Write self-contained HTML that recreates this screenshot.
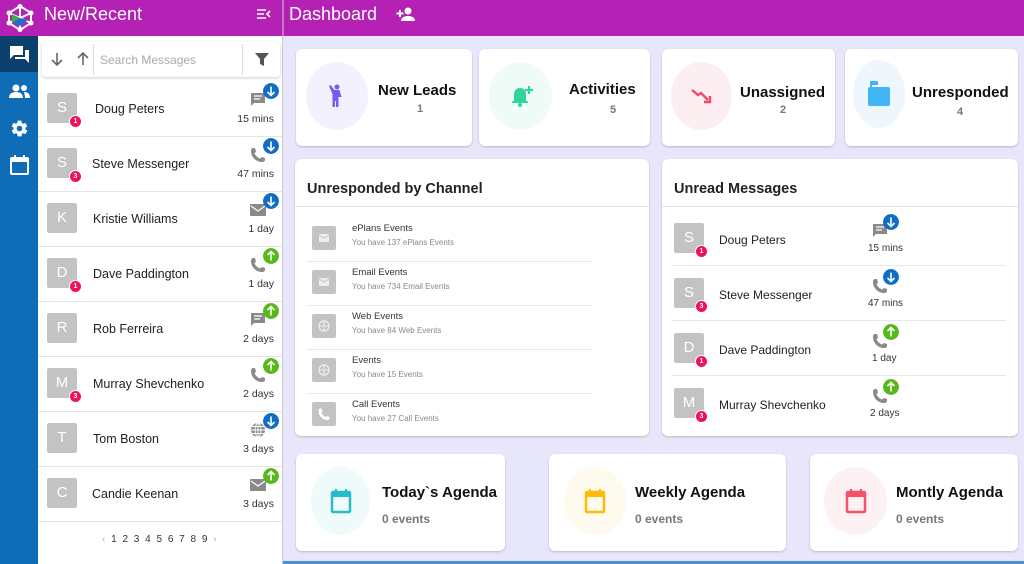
<!DOCTYPE html>
<html><head><meta charset="utf-8"><style>
*{box-sizing:border-box;margin:0;padding:0}
body{width:1024px;height:564px;overflow:hidden;background:#e7e6fb;font-family:"Liberation Sans",sans-serif;position:relative}
.abs{position:absolute}
.top{left:0;top:0;width:1024px;height:36px;background:#b520b5}
.nav{left:0;top:36px;width:38px;height:528px;background:#0f6db8}
.list{left:38px;top:36px;width:245px;height:528px;background:#fff;border-right:1px solid #ccc}
.row{position:absolute;left:38px;width:244px;height:55px;border-bottom:1px solid #e4e4e4}
.av{position:absolute;left:9px;top:11px;width:30px;height:30px;background:#c3c3c3;border-radius:2px;color:#fff;font-size:15px;text-align:center;line-height:30px}
.bd{position:absolute;left:31px;top:33px;width:13px;height:13px;border-radius:50%;background:#f0105a;color:#fff;font-size:7px;font-weight:bold;text-align:center;line-height:12px;border:1px solid #fff}
.nm{position:absolute;left:54px;top:20px;font-size:12.5px;color:#222}
.tm{position:absolute;right:8px;top:31px;font-size:10.5px;color:#333}
.ic{position:absolute;right:16px;top:10px;width:16px;height:16px}
.dot{position:absolute;right:3px;top:1px;width:16px;height:16px;border-radius:50%}
.card{position:absolute;background:#fff;border-radius:6px;box-shadow:0 1px 2px rgba(0,0,0,.2)}
.circ{position:absolute;border-radius:50%}
.st{position:absolute;font-size:15px;font-weight:bold;color:#111;white-space:nowrap}
.sn{position:absolute;font-size:11px;font-weight:bold;color:#777}
.ch{position:absolute;left:12px;width:285px;height:44px;border-bottom:1px solid #e8e8e8}
.chi{position:absolute;left:5px;top:8px;width:24px;height:24px;background:#c3c3c3;border-radius:2px}
.cht{position:absolute;left:45px;top:5px;font-size:9.5px;color:#333}
.chs{position:absolute;left:45px;top:20px;font-size:8px;color:#888}
.ur{position:absolute;left:10px;width:334px;height:55px;border-bottom:1px solid #e8e8e8}
.ur .av{left:2px;top:12px}
.ur .bd{left:23px;top:34px}
.ur .nm{left:47px;top:22px;font-size:12px}
.ur .ic{left:200px;top:12px}
.ur .dot{left:211px;top:3px}
.ur .tm{left:196px;right:auto;top:32px;font-size:10px}
</style></head><body>
<div class="abs top"></div>
<svg class="abs" style="left:6px;top:4px" width="28" height="28" viewBox="0 0 28 28"><g stroke="#fff" stroke-width="2" fill="none"><path d="M14 2L25 9 25 19 14 26 3 19 3 9Z"/><path d="M3 9L25 19M25 9L3 19M14 2V26"/></g><path d="M14 14L6 10 6 18Z" fill="#3cb043"/><path d="M14 14L22 16 14 22 6 18Z" fill="#1a73c9"/><circle cx="14" cy="2.5" r="2.5" fill="#fff"/><circle cx="25" cy="9" r="2.5" fill="#fff"/><circle cx="25" cy="19" r="2.5" fill="#fff"/><circle cx="14" cy="25.5" r="2.5" fill="#fff"/><circle cx="3" cy="19" r="2.5" fill="#fff"/><circle cx="3" cy="9" r="2.5" fill="#fff"/></svg>
<div class="abs" style="left:44px;top:4px;color:#fff;font-size:18px">New/Recent</div>
<svg class="abs" style="left:256px;top:7px" width="15" height="14" viewBox="0 0 15 14"><g stroke="#fff" stroke-width="1.6" fill="none"><path d="M1 3H10M1 7H8M1 11H10M14 4L11 7 14 10"/></g></svg>
<div class="abs" style="left:282px;top:0;width:2px;height:36px;background:#c973c9"></div>
<div class="abs" style="left:289px;top:4px;color:#fff;font-size:18px">Dashboard</div>
<svg class="abs" style="left:396px;top:6px" width="20" height="16" viewBox="0 0 20 16"><circle cx="12" cy="5" r="3.5" fill="#fff"/><path d="M5 15c0-4 4-5 7-5s7 1 7 5z" fill="#fff"/><path d="M4 4v7M0.5 7.5h7" stroke="#fff" stroke-width="2"/></svg>

<div class="abs nav"></div>
<div class="abs" style="left:0;top:36px;width:38px;height:36px;background:#0b3f6e"></div>
<svg class="abs" style="left:9px;top:45px" width="21" height="19" viewBox="0 0 21 19"><path d="M1 1h13v9H5l-4 4z" fill="#fff"/><path d="M16 5h4v13l-4-4H6v-2h10z" fill="#fff"/></svg>
<svg class="abs" style="left:9px;top:84px" width="21" height="14" viewBox="0 0 21 14"><circle cx="7" cy="4" r="3.5" fill="#fff"/><circle cx="15" cy="4" r="3" fill="#fff"/><path d="M0 14c0-5 4-6 7-6s7 1 7 6z M15 8c3 0 6 1 6 6h-5c0-3-1-5-1-6z" fill="#fff"/></svg>
<svg class="abs" style="left:10px;top:119px" width="19" height="19" viewBox="0 0 24 24"><path fill="#fff" d="M19.4 13c.04-.3.06-.6.06-1s-.02-.7-.06-1l2.1-1.6c.2-.15.24-.4.12-.6l-2-3.5c-.12-.2-.38-.3-.6-.2l-2.5 1c-.5-.4-1.1-.7-1.700-1l-.4-2.6C14.4 2.2 14.2 2 14 2h-4c-.25 0-.45.2-.5.4l-.4 2.6c-.6.3-1.2.6-1.7 1l-2.5-1c-.2-.1-.5 0-.6.2l-2 3.5c-.1.2-.06.45.12.6L4.6 11c-.04.3-.06.6-.06 1s.02.7.06 1l-2.1 1.6c-.2.15-.24.4-.12.6l2 3.5c.12.2.38.3.6.2l2.5-1c.5.4 1.1.7 1.7 1l.4 2.6c.05.2.25.4.5.4h4c.25 0 .45-.2.5-.4l.4-2.6c.6-.3 1.2-.6 1.7-1l2.5 1c.2.1.5 0 .6-.2l2-3.5c.12-.2.07-.45-.12-.6zM12 15.5A3.5 3.5 0 1 1 12 8.5a3.5 3.5 0 0 1 0 7z"/></svg>
<svg class="abs" style="left:10px;top:155px" width="19" height="20" viewBox="0 0 19 20"><rect x="1" y="3" width="17" height="16" rx="1" fill="none" stroke="#fff" stroke-width="2"/><rect x="1" y="3" width="17" height="4" fill="#fff"/><path d="M5 0v4M14 0v4" stroke="#fff" stroke-width="2"/></svg>

<div class="abs list"></div>
<div class="abs" style="left:42px;top:42px;width:238px;height:35px;border-radius:4px;box-shadow:0 1px 3px rgba(0,0,0,.2);background:#fff"></div>
<svg class="abs" style="left:50px;top:52px" width="40" height="14" viewBox="0 0 40 14"><g stroke="#666" stroke-width="1.6" fill="none"><path d="M7 1v12M2 8l5 5 5-5M33 13V1M28 6l5-5 5 5"/></g></svg>
<div class="abs" style="left:93px;top:44px;width:1px;height:31px;background:#ddd"></div>
<div class="abs" style="left:100px;top:53px;font-size:12px;color:#aaa">Search Messages</div>
<div class="abs" style="left:242px;top:44px;width:1px;height:31px;background:#ddd"></div>
<svg class="abs" style="left:255px;top:53px" width="14" height="13" viewBox="0 0 14 13"><path d="M0 0h14L9 6v7L5 11V6z" fill="#555"/></svg>

<svg width="0" height="0" style="position:absolute"><defs>
<g id="chat"><path d="M1 1h14v10H4l-3 3z" fill="#8a8a8a"/><path d="M4 4h8M4 7h6" stroke="#fff" stroke-width="1.2"/></g>
<g id="phone"><path d="M3 1c-1 0-2 1-2 3 0 6 5 11 11 11 2 0 3-1 3-2v-2l-3-1-2 1.5C7.5 10.5 5.5 8.5 4.5 6.5L6 4.5 5 1z" fill="#8a8a8a"/></g>
<g id="mail"><rect x="0" y="2" width="16" height="12" rx="1" fill="#8a8a8a"/><path d="M1 4l7 5 7-5" stroke="#fff" stroke-width="1.2" fill="none"/></g>
<g id="globe"><circle cx="8" cy="8" r="7" fill="#8a8a8a"/><g stroke="#fff" stroke-width=".9" fill="none"><ellipse cx="8" cy="8" rx="3" ry="7"/><path d="M1 8h14M2 4.5h12M2 11.5h12M8 1v14"/></g></g>
<g id="dn"><circle cx="8" cy="8" r="8" fill="#0f6dc3"/><path d="M8 3.5v9M4.5 9l3.5 3.5L11.5 9" stroke="#fff" stroke-width="1.6" fill="none"/></g>
<g id="up"><circle cx="8" cy="8" r="8" fill="#56b81a"/><path d="M8 12.5v-9M4.5 7l3.5-3.5L11.5 7" stroke="#fff" stroke-width="1.6" fill="none"/></g>
</defs></svg>

<div class="row" style="top:82px"><div class="av">S</div><div class="bd">1</div><div class="nm" style="left:57px">Doug Peters</div><svg class="ic" viewBox="0 0 16 16"><use href="#chat"/></svg><svg class="dot" viewBox="0 0 16 16"><use href="#dn"/></svg><div class="tm">15 mins</div></div>
<div class="row" style="top:137px"><div class="av">S</div><div class="bd">3</div><div class="nm">Steve Messenger</div><svg class="ic" viewBox="0 0 16 16"><use href="#phone"/></svg><svg class="dot" viewBox="0 0 16 16"><use href="#dn"/></svg><div class="tm">47 mins</div></div>
<div class="row" style="top:192px"><div class="av">K</div><div class="nm" style="left:55px">Kristie Williams</div><svg class="ic" viewBox="0 0 16 16"><use href="#mail"/></svg><svg class="dot" viewBox="0 0 16 16"><use href="#dn"/></svg><div class="tm">1 day</div></div>
<div class="row" style="top:247px"><div class="av">D</div><div class="bd">1</div><div class="nm" style="left:55px">Dave Paddington</div><svg class="ic" viewBox="0 0 16 16"><use href="#phone"/></svg><svg class="dot" viewBox="0 0 16 16"><use href="#up"/></svg><div class="tm">1 day</div></div>
<div class="row" style="top:302px"><div class="av">R</div><div class="nm" style="left:55px">Rob Ferreira</div><svg class="ic" viewBox="0 0 16 16"><use href="#chat"/></svg><svg class="dot" viewBox="0 0 16 16"><use href="#up"/></svg><div class="tm">2 days</div></div>
<div class="row" style="top:357px"><div class="av">M</div><div class="bd">3</div><div class="nm" style="left:55px">Murray Shevchenko</div><svg class="ic" viewBox="0 0 16 16"><use href="#phone"/></svg><svg class="dot" viewBox="0 0 16 16"><use href="#up"/></svg><div class="tm">2 days</div></div>
<div class="row" style="top:412px"><div class="av">T</div><div class="nm" style="left:55px">Tom Boston</div><svg class="ic" viewBox="0 0 16 16"><use href="#globe"/></svg><svg class="dot" viewBox="0 0 16 16"><use href="#dn"/></svg><div class="tm">3 days</div></div>
<div class="row" style="top:467px"><div class="av">C</div><div class="nm">Candie Keenan</div><svg class="ic" viewBox="0 0 16 16"><use href="#mail"/></svg><svg class="dot" viewBox="0 0 16 16"><use href="#up"/></svg><div class="tm">3 days</div></div>
<div class="abs" style="left:102px;top:534px;font-size:10px;color:#333;letter-spacing:1.5px"><span style="color:#aaa">‹</span> 1 2 3 4 5 6 7 8 9 <span style="color:#aaa">›</span></div>

<!-- stat cards -->
<div class="card" style="left:296px;top:49px;width:176px;height:97px"><div class="circ" style="left:10px;top:13px;width:62px;height:68px;background:#f3f1fd"></div>
<svg class="abs" style="left:32px;top:35px" width="18" height="24" viewBox="0 0 18 24"><circle cx="9" cy="3" r="2.5" fill="#7a5af5"/><path d="M1 2l1.5-1 4 5h5l2 7h-3v10H8v-6H7v6H4.5V10z" fill="#7a5af5"/></svg>
<div class="st" style="left:82px;top:33px">New Leads</div><div class="sn" style="left:121px;top:54px">1</div></div>
<div class="card" style="left:479px;top:49px;width:171px;height:97px"><div class="circ" style="left:10px;top:13px;width:63px;height:68px;background:#effbf6"></div>
<svg class="abs" style="left:31px;top:36px" width="24" height="22" viewBox="0 0 24 22"><path d="M10 3c-4 0-6 3-6 7v5l-2 2v1h16v-1l-2-2v-5c0-4-2-7-6-7z" fill="#2fd49a"/><circle cx="10" cy="20" r="2" fill="#2fd49a"/><path d="M19 1v8M15 5h8" stroke="#2fd49a" stroke-width="2.2"/></svg>
<div class="st" style="left:90px;top:32px">Activities</div><div class="sn" style="left:131px;top:55px">5</div></div>
<div class="card" style="left:662px;top:49px;width:173px;height:97px"><div class="circ" style="left:9px;top:13px;width:61px;height:68px;background:#fdeff1"></div>
<svg class="abs" style="left:29px;top:39px" width="24" height="16" viewBox="0 0 24 16"><path d="M1 2l6 5 3-2 7 7" stroke="#f2476a" stroke-width="2.4" fill="none"/><path d="M19 8v6h-6" stroke="#f2476a" stroke-width="2.4" fill="none"/></svg>
<div class="st" style="left:78px;top:35px">Unassigned</div><div class="sn" style="left:118px;top:55px">2</div></div>
<div class="card" style="left:845px;top:49px;width:173px;height:97px"><div class="circ" style="left:8px;top:11px;width:52px;height:68px;background:#eef7fe"></div>
<svg class="abs" style="left:22px;top:30px" width="24" height="28" viewBox="0 0 24 28"><rect x="1" y="8" width="22" height="19" rx="2" fill="#41b5f6"/><path d="M3 2h8v4H5v6H3z" fill="#41b5f6"/><path d="M5 6h8v2H5z" fill="#fff"/></svg>
<div class="st" style="left:67px;top:35px">Unresponded</div><div class="sn" style="left:112px;top:57px">4</div></div>

<!-- channel card -->
<div class="card" style="left:295px;top:159px;width:354px;height:277px">
<div class="abs" style="left:12px;top:22px;font-size:14.5px;font-weight:bold;color:#222">Unresponded by Channel</div>
<div class="abs" style="left:0;top:47px;width:354px;height:1px;background:#e3e3e3"></div>
<div class="ch" style="top:59px"><div class="chi"><svg width="24" height="24" viewBox="-7 -8 24 24"><rect width="10" height="8" fill="#eee"/><path d="M0 1l5 3 5-3" stroke="#c3c3c3" fill="none"/></svg></div><div class="cht">ePlans Events</div><div class="chs">You have 137 ePlans Events</div></div>
<div class="ch" style="top:103px"><div class="chi"><svg width="24" height="24" viewBox="-7 -8 24 24"><rect width="10" height="8" fill="#eee"/><path d="M0 1l5 3 5-3" stroke="#c3c3c3" fill="none"/></svg></div><div class="cht">Email Events</div><div class="chs">You have 734 Email Events</div></div>
<div class="ch" style="top:147px"><div class="chi"><svg width="24" height="24" viewBox="-7 -7 24 24"><circle cx="5" cy="5" r="5" fill="none" stroke="#eee" stroke-width="1.2"/><path d="M0 5h10M5 0v10" stroke="#eee"/></svg></div><div class="cht">Web Events</div><div class="chs">You have 84 Web Events</div></div>
<div class="ch" style="top:191px"><div class="chi"><svg width="24" height="24" viewBox="-7 -7 24 24"><circle cx="5" cy="5" r="5" fill="none" stroke="#eee" stroke-width="1.2"/><path d="M0 5h10M5 0v10" stroke="#eee"/></svg></div><div class="cht">Events</div><div class="chs">You have 15 Events</div></div>
<div class="ch" style="top:235px;border:none"><div class="chi"><svg width="24" height="24" viewBox="-6 -6 24 24"><path d="M2 0.5c-1 0-1.5 1-1.5 2.5 0 5 4 9 9 9 1.5 0 2-1 2-1.5V9l-2.5-1-1.5 1C6 8 4.5 6.5 3.5 5L4.5 3.5 3.700 0.5z" fill="#fff"/></svg></div><div class="cht">Call Events</div><div class="chs">You have 27 Call Events</div></div>
</div>

<!-- unread -->
<div class="card" style="left:662px;top:159px;width:356px;height:277px">
<div class="abs" style="left:12px;top:22px;font-size:14.5px;font-weight:bold;color:#222">Unread Messages</div>
<div class="abs" style="left:0;top:47px;width:356px;height:1px;background:#e3e3e3"></div>
<div class="ur" style="top:52px"><div class="av">S</div><div class="bd">1</div><div class="nm">Doug Peters</div><svg class="ic" viewBox="0 0 16 16"><use href="#chat"/></svg><svg class="dot" viewBox="0 0 16 16"><use href="#dn"/></svg><div class="tm">15 mins</div></div>
<div class="ur" style="top:107px"><div class="av">S</div><div class="bd">3</div><div class="nm">Steve Messenger</div><svg class="ic" viewBox="0 0 16 16"><use href="#phone"/></svg><svg class="dot" viewBox="0 0 16 16"><use href="#dn"/></svg><div class="tm">47 mins</div></div>
<div class="ur" style="top:162px"><div class="av">D</div><div class="bd">1</div><div class="nm">Dave Paddington</div><svg class="ic" viewBox="0 0 16 16"><use href="#phone"/></svg><svg class="dot" viewBox="0 0 16 16"><use href="#up"/></svg><div class="tm" style="left:200px">1 day</div></div>
<div class="ur" style="top:217px;border:none"><div class="av">M</div><div class="bd">3</div><div class="nm">Murray Shevchenko</div><svg class="ic" viewBox="0 0 16 16"><use href="#phone"/></svg><svg class="dot" viewBox="0 0 16 16"><use href="#up"/></svg><div class="tm" style="left:198px">2 days</div></div>
</div>

<!-- agenda -->
<div class="card" style="left:296px;top:454px;width:209px;height:97px"><div class="circ" style="left:15px;top:13px;width:59px;height:68px;background:#effafb"></div>
<svg class="abs" style="left:34px;top:34px" width="22" height="26" viewBox="0 0 22 26"><rect x="2" y="4" width="18" height="20" rx="1" fill="none" stroke="#26bccc" stroke-width="2.5"/><rect x="2" y="4" width="18" height="5" fill="#26bccc"/><path d="M6 1v4M16 1v4" stroke="#26bccc" stroke-width="2"/></svg>
<div class="st" style="left:86px;top:30px">Today`s Agenda</div><div class="sn" style="left:86px;top:58px;font-size:12px">0 events</div></div>
<div class="card" style="left:549px;top:454px;width:237px;height:97px"><div class="circ" style="left:15px;top:13px;width:62px;height:68px;background:#fefaee"></div>
<svg class="abs" style="left:35px;top:34px" width="22" height="26" viewBox="0 0 22 26"><rect x="2" y="4" width="18" height="20" rx="1" fill="none" stroke="#ffbb0a" stroke-width="2.5"/><rect x="2" y="4" width="18" height="5" fill="#ffbb0a"/><path d="M6 1v4M16 1v4" stroke="#ffbb0a" stroke-width="2"/></svg>
<div class="st" style="left:86px;top:30px">Weekly Agenda</div><div class="sn" style="left:86px;top:58px;font-size:12px">0 events</div></div>
<div class="card" style="left:810px;top:454px;width:208px;height:97px"><div class="circ" style="left:14px;top:13px;width:63px;height:68px;background:#fef1f3"></div>
<svg class="abs" style="left:35px;top:34px" width="22" height="26" viewBox="0 0 22 26"><rect x="2" y="4" width="18" height="20" rx="1" fill="none" stroke="#f6516a" stroke-width="2.5"/><rect x="2" y="4" width="18" height="5" fill="#f6516a"/><path d="M6 1v4M16 1v4" stroke="#f6516a" stroke-width="2"/></svg>
<div class="st" style="left:86px;top:30px">Montly Agenda</div><div class="sn" style="left:86px;top:58px;font-size:12px">0 events</div></div>
<div class="abs" style="left:283px;top:561px;width:741px;height:3px;background:#4c8fd6"></div>
</body></html>
